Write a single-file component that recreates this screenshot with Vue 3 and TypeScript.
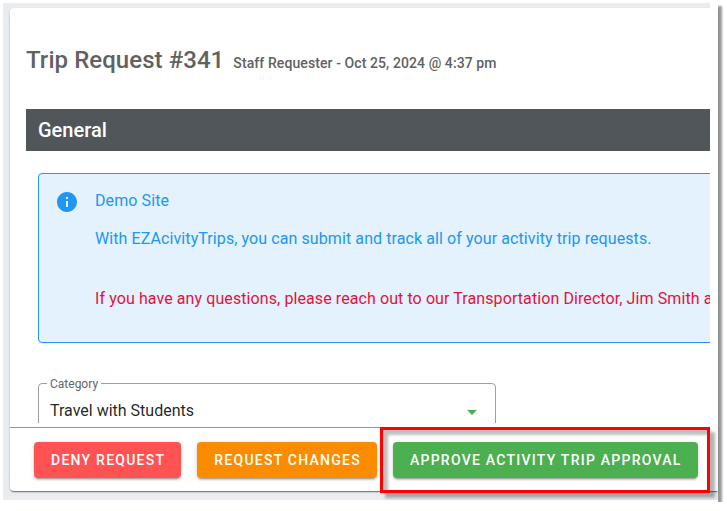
<script setup lang="ts">
const buttons = [
  { label: 'Deny Request', tone: 'deny' },
  { label: 'Request Changes', tone: 'changes' },
  { label: 'Approve Activity Trip Approval', tone: 'approve' },
]
</script>

<template>
  <div class="shot">
    <div class="stage">
      <div class="card">
        <main class="content">
          <header class="heading">
            <h1>Trip Request #341</h1>
            <span class="meta">Staff Requester - Oct 25, 2024 @ 4:37 pm</span>
          </header>
          <h2 class="bar">General</h2>
          <section class="alert">
            <svg class="info" viewBox="0 0 24 24" aria-hidden="true">
              <path fill="#2196f3" d="M12 2C6.48 2 2 6.48 2 12s4.48 10 10 10 10-4.48 10-10S17.52 2 12 2zm1 15h-2v-6h2v6zm0-8h-2V7h2v2z" />
            </svg>
            <div class="alert-text">
              <p class="l1">Demo Site</p>
              <p class="l2">With EZAcivityTrips, you can submit and track all of your activity trip requests.</p>
              <p class="l3">If you have any questions, please reach out to our Transportation Director, Jim Smith at extension 1234.</p>
            </div>
          </section>
          <div class="field">
            <span class="field-label">Category</span>
            <span class="field-value">Travel with Students</span>
            <span class="arrow"></span>
          </div>
        </main>
        <footer class="actions">
          <button v-for="b in buttons" :key="b.tone" type="button" :class="['btn', b.tone]">{{ b.label }}</button>
        </footer>
      </div>
      <div class="gutter"></div>
    </div>
    <div class="callout"></div>
  </div>
</template>

<style scoped>
.shot {
  position: relative;
  box-sizing: border-box;
  width: 715px;
  height: 499px;
  margin: 3px 0 0 3px;
  background: #fff;
  box-shadow: 4px 3px 2px #9a9a9a;
  font-family: Roboto, "Liberation Sans", sans-serif;
}
.stage {
  position: relative;
  box-sizing: border-box;
  height: 497px;
  padding: 5px 0 9px 7px;
  background: #e9edf0;
}
.gutter {
  position: absolute;
  top: 0;
  right: 0;
  width: 8px;
  height: 430px;
  background: #fff;
}
.card {
  display: flex;
  flex-direction: column;
  height: 100%;
  background: #fff;
  border-radius: 4px 0 0 4px;
  box-shadow: 0 2px 1px -1px rgba(0, 0, 0, .35), 0 1px 2px rgba(0, 0, 0, .3);
  overflow: hidden;
}
.content {
  flex: 1;
  min-height: 0;
  margin: 0 8px 4px 0;
  padding: 37px 0 0 16px;
  overflow: hidden;
}
.heading {
  display: flex;
  align-items: baseline;
  gap: 9px;
  height: 64px;
}
h1 {
  margin: 0;
  font-size: 24px;
  line-height: 30px;
  font-weight: 500;
  letter-spacing: .06px;
  color: #616161;
}
.meta {
  font-size: 14px;
  font-weight: 500;
  letter-spacing: .09px;
  color: #616161;
}
.bar {
  box-sizing: border-box;
  height: 42px;
  margin: 0;
  padding: 0 12px;
  background: #505659;
  color: #fff;
  font-size: 20px;
  line-height: 42px;
  font-weight: 500;
}
.alert {
  display: flex;
  box-sizing: border-box;
  width: 800px;
  height: 170px;
  margin: 22px 0 40px 12px;
  padding: 15px 16px;
  background: #e3f2fd;
  border: 1px solid #2196f3;
  border-radius: 4px;
}
.info {
  flex: none;
  width: 24px;
  height: 24px;
  margin: 1px 16px 0 0;
}
.alert-text {
  white-space: nowrap;
  font-size: 16px;
  line-height: 24px;
  letter-spacing: .09px;
  color: #2196f3;
}
.alert-text p {
  margin: 0;
}
.l2 {
  padding-top: 14px;
}
.l3 {
  padding-top: 36px;
  color: #e5113a;
}
.field {
  position: relative;
  box-sizing: border-box;
  width: 458px;
  height: 60px;
  margin-left: 12px;
  padding: 16px 11px;
  border: 1px solid #9e9e9e;
  border-radius: 4px;
}
.field-label {
  position: absolute;
  top: -7px;
  left: 8px;
  padding: 0 3px;
  background: #fff;
  font-size: 12px;
  line-height: 14px;
  color: #666;
}
.field-value {
  font-size: 16px;
  line-height: 22px;
  color: rgba(0, 0, 0, .87);
}
.arrow {
  position: absolute;
  top: 26px;
  right: 18px;
  border-left: 5px solid transparent;
  border-right: 5px solid transparent;
  border-top: 5px solid #4caf50;
}
.actions {
  display: flex;
  flex: none;
  gap: 16px;
  height: 64px;
  box-sizing: border-box;
  padding: 14px 24px 0;
  border-top: 1px solid #8f96a3;
}
.btn {
  flex: none;
  height: 36px;
  padding: 0 16px 0 17px;
  border: 0;
  border-radius: 4px;
  color: #fff;
  font: 500 14px/36px Roboto, "Liberation Sans", sans-serif;
  letter-spacing: 1.25px;
  text-transform: uppercase;
  white-space: nowrap;
  box-shadow: 0 3px 1px -2px rgba(0, 0, 0, .2), 0 2px 2px rgba(0, 0, 0, .14), 0 1px 5px rgba(0, 0, 0, .12);
}
.deny { background: #ff5252; }
.changes { background: #fb8c00; }
.approve { background: #4caf50; }
.callout {
  position: absolute;
  top: 424px;
  left: 377px;
  box-sizing: border-box;
  width: 330px;
  height: 66px;
  border: 3px solid #f00;
  box-shadow: 5px 5px 3px rgba(0, 0, 0, .3), inset 5px 5px 3px rgba(0, 0, 0, .25);
  pointer-events: none;
}
</style>

<style>
html, body {
  background: #fff;
}
</style>
